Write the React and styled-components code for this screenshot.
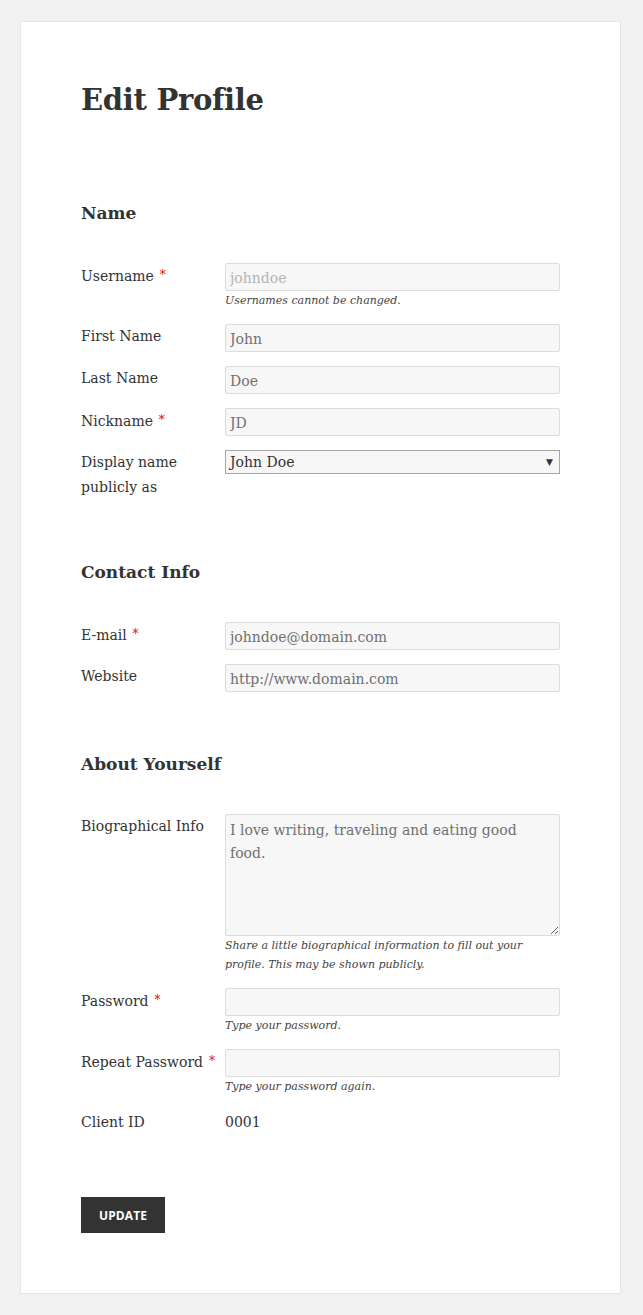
import React from "react";
import styled, { createGlobalStyle } from "styled-components";

const Global = createGlobalStyle`
  html, body { background: #f1f1f1; }
  body {
    margin: 21px 20px;
    font-family: "DejaVu Serif", "Liberation Serif", serif;
    color: #333;
  }
  * { box-sizing: border-box; }
`;

const Card = styled.div`
  width: 601px;
  background: #fff;
  border: 1px solid #e6e6e6;
  padding: 58px 60px 60px;
`;

const Title = styled.h1`
  margin: 0 0 81px;
  font-size: 29px;
  line-height: 40px;
  font-weight: 700;
  letter-spacing: -0.3px;
`;

const Section = styled.section`
  & + & { margin-top: 60px; }
`;

const SectionTitle = styled.h3`
  margin: 0 0 38px;
  font-size: 17px;
  line-height: 24px;
  font-weight: 700;
`;

const Rows = styled.div`
  display: flex;
  flex-direction: column;
  gap: 14px;
`;

const Row = styled.div`
  display: grid;
  grid-template-columns: 144px 335px;
  align-items: start;
`;

const Label = styled.label`
  font-size: 14px;
  line-height: 25px;
  padding-right: 4px;
`;

const Req = styled.span`
  color: #e00;
  font-size: 12px;
  vertical-align: 2px;
  white-space: nowrap;
  margin-left: 2px;
`;

const Field = styled.div`
  display: flex;
  flex-direction: column;
`;

const inputStyles = `
  width: 100%;
  font-family: "DejaVu Serif", "Liberation Serif", serif;
  font-size: 14px;
  color: #707070;
  background: #f7f7f7;
  border: 1px solid #dcdcdc;
  border-radius: 2px;
  outline: none;
`;

const Input = styled.input`
  ${inputStyles}
  height: 28px;
  padding: 2px 4px 0;
  &:disabled { color: #b4b4b4; background: #f7f7f7; }
`;

const TextArea = styled.textarea`
  ${inputStyles}
  height: 122px;
  padding: 4px 4px;
  line-height: 23px;
  resize: vertical;
`;

const SelectBox = styled.div`
  position: relative;
  height: 24px;
  border: 1px solid #a6a6a6;
  background: #f7f7f7;
  font-size: 14px;
  line-height: 22px;
  color: #333;
  padding: 0 4px;
`;

const Caret = styled.span`
  position: absolute;
  right: 6px;
  top: 0;
  font-size: 9px;
  color: #333;
`;

const Desc = styled.p`
  margin: 0;
  font-size: 11px;
  line-height: 19px;
  font-style: italic;
  color: #444;
`;

const Value = styled.div`
  font-size: 14px;
  line-height: 25px;
`;

const Button = styled.button`
  margin-top: 62px;
  background: #333;
  color: #fff;
  border: 0;
  height: 36px;
  padding: 0 18px;
  font-family: "Open Sans", "Noto Sans", sans-serif;
  font-weight: 700;
  font-size: 12px;
  letter-spacing: 0.1px;
  text-transform: uppercase;
  cursor: pointer;
`;

const Star = () => <Req>{"\u00a0*"}</Req>;

export default function App() {
  return (
    <>
      <Global />
      <Card>
        <Title>Edit Profile</Title>
        <Section>
          <SectionTitle>Name</SectionTitle>
          <Rows>
            <Row>
              <Label>Username<Star /></Label>
              <Field>
                <Input disabled defaultValue="johndoe" />
                <Desc>Usernames cannot be changed.</Desc>
              </Field>
            </Row>
            <Row>
              <Label>First Name</Label>
              <Field><Input defaultValue="John" /></Field>
            </Row>
            <Row>
              <Label>Last Name</Label>
              <Field><Input defaultValue="Doe" /></Field>
            </Row>
            <Row>
              <Label>Nickname<Star /></Label>
              <Field><Input defaultValue="JD" /></Field>
            </Row>
            <Row>
              <Label>Display name publicly as</Label>
              <Field>
                <SelectBox>John Doe<Caret>▼</Caret></SelectBox>
              </Field>
            </Row>
          </Rows>
        </Section>
        <Section>
          <SectionTitle>Contact Info</SectionTitle>
          <Rows>
            <Row>
              <Label>E-mail<Star /></Label>
              <Field><Input defaultValue="johndoe@domain.com" /></Field>
            </Row>
            <Row>
              <Label>Website</Label>
              <Field><Input defaultValue="http://www.domain.com" /></Field>
            </Row>
          </Rows>
        </Section>
        <Section>
          <SectionTitle>About Yourself</SectionTitle>
          <Rows>
            <Row>
              <Label>Biographical Info</Label>
              <Field>
                <TextArea defaultValue="I love writing, traveling and eating good food." />
                <Desc>Share a little biographical information to fill out your profile. This may be shown publicly.</Desc>
              </Field>
            </Row>
            <Row>
              <Label>Password<Star /></Label>
              <Field>
                <Input type="password" />
                <Desc>Type your password.</Desc>
              </Field>
            </Row>
            <Row>
              <Label>Repeat Password<Star /></Label>
              <Field>
                <Input type="password" />
                <Desc>Type your password again.</Desc>
              </Field>
            </Row>
            <Row>
              <Label>Client ID</Label>
              <Value>0001</Value>
            </Row>
          </Rows>
        </Section>
        <Button>Update</Button>
      </Card>
    </>
  );
}
